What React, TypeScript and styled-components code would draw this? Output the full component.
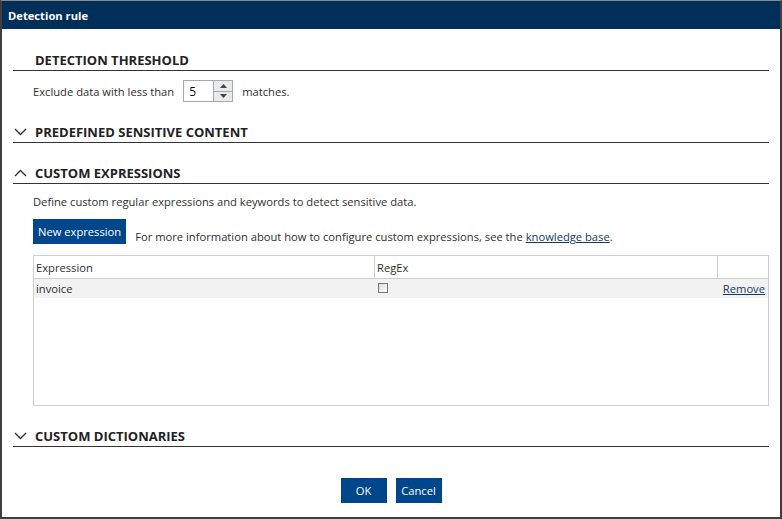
import React from "react";
import styled, { createGlobalStyle } from "styled-components";

const GlobalStyle = createGlobalStyle`
  html, body {
    margin: 0;
    padding: 0;
    background: #ffffff;
  }
  body {
    font-family: "Open Sans", "Noto Sans", "Liberation Sans", sans-serif;
    font-size: 11.2px;
    color: #2f2f2f;
  }
`;

const Window = styled.div`
  box-sizing: border-box;
  width: 782px;
  height: 519px;
  display: flex;
  flex-direction: column;
  border: 2px solid #3f3f3f;
  border-top: 1px solid #8a8a8a;
  background: #ffffff;
`;

const TitleBar = styled.div`
  height: 28px;
  flex-shrink: 0;
  background: #002f5a;
  color: #ffffff;
  font-weight: 700;
  font-size: 11.2px;
  display: flex;
  align-items: center;
  padding-left: 6px;
`;

const Body = styled.div`
  flex: 1;
  display: flex;
  flex-direction: column;
  padding: 21px 11px 0 11px;
`;

const Section = styled.section`
  display: flex;
  flex-direction: column;
  margin-bottom: 20px;
`;

const SectionHeader = styled.div`
  height: 20px;
  display: flex;
  align-items: center;
  border-bottom: 1px solid #333333;
`;

const ChevronSlot = styled.span`
  width: 21px;
  display: flex;
  align-items: center;
  padding-left: 1px;
`;

const SectionTitle = styled.h2`
  margin: 0;
  font-size: 13px;
  font-weight: 700;
  color: #222222;
  text-transform: uppercase;
`;

const SectionContent = styled.div`
  display: flex;
  flex-direction: column;
  padding-left: 20px;
`;

const ThresholdRow = styled.div`
  display: flex;
  align-items: center;
  gap: 9px;
  margin-top: 9px;
`;

const Spinner = styled.div`
  display: flex;
  height: 22px;
`;

const SpinInput = styled.div`
  box-sizing: border-box;
  width: 30px;
  height: 22px;
  border: 1px solid #a9a9a9;
  border-right: none;
  padding-left: 5px;
  display: flex;
  align-items: center;
  color: #111111;
  font-size: 12px;
`;

const SpinButtons = styled.div`
  display: flex;
  flex-direction: column;
  width: 20px;
`;

const SpinButton = styled.div<{ $up?: boolean }>`
  box-sizing: border-box;
  flex: 1;
  display: flex;
  align-items: center;
  justify-content: center;
  background: #e9eaeb;
  border: 1px solid #a9a9a9;
  border-top: ${(p) => (p.$up ? "1px solid #a9a9a9" : "none")};
`;

const Description = styled.div`
  margin-top: 10px;
  line-height: 16px;
`;

const ActionRow = styled.div`
  display: flex;
  align-items: flex-start;
  gap: 9px;
  margin-top: 9px;
`;

const PrimaryButton = styled.button`
  box-sizing: border-box;
  height: 25px;
  padding: 0 5px;
  border: none;
  background: #00468b;
  color: #ffffff;
  font-family: inherit;
  font-size: 11.2px;
  cursor: pointer;
  display: flex;
  align-items: center;
  justify-content: center;
`;

const InfoText = styled.span`
  padding-top: 11px;
  line-height: 14px;
`;

const Link = styled.a`
  color: #123a63;
  text-decoration: underline;
`;

const Table = styled.div`
  box-sizing: border-box;
  margin-top: 11px;
  height: 151px;
  border: 1px solid #cfcfcf;
  display: flex;
  flex-direction: column;
`;

const Row = styled.div<{ $head?: boolean }>`
  display: grid;
  grid-template-columns: 340px 343px 1fr;
  height: ${(p) => (p.$head ? "22px" : "19px")};
  background: ${(p) => (p.$head ? "#ffffff" : "#f2f2f2")};
  border-bottom: ${(p) => (p.$head ? "1px solid #cfcfcf" : "none")};
`;

const Cell = styled.div<{ $head?: boolean; $right?: boolean }>`
  display: flex;
  align-items: center;
  justify-content: ${(p) => (p.$right ? "flex-end" : "flex-start")};
  padding: 0 3px 0 2px;
  border-left: ${(p) => (p.$head ? "1px solid #cfcfcf" : "none")};
  &:first-child {
    border-left: none;
  }
`;

const Checkbox = styled.span`
  box-sizing: border-box;
  width: 10px;
  height: 10px;
  margin: -2px 0 0 2px;
  border: 1px solid #777777;
  background: linear-gradient(135deg, #d8dbe2, #ffffff);
`;

const Footer = styled.div`
  display: flex;
  justify-content: center;
  gap: 9px;
  margin-top: 11px;
`;

const DialogButton = styled(PrimaryButton)`
  width: 46px;
  padding: 0;
`;

const Chevron = ({ up }: { up?: boolean }) => (
  <svg width="13" height="8" viewBox="0 0 13 8">
    <path
      d={up ? "M1 7 L6.5 1.5 L12 7" : "M1 1 L6.5 6.5 L12 1"}
      fill="none"
      stroke="#333"
      strokeWidth="1.4"
    />
  </svg>
);

const Arrow = ({ up }: { up?: boolean }) => (
  <svg width="7" height="4" viewBox="0 0 7 4">
    <path d={up ? "M0 4 L3.5 0 L7 4 Z" : "M0 0 L3.5 4 L7 0 Z"} fill="#444" />
  </svg>
);

const SectionBlock: React.FC<{
  title: string;
  chevron?: "up" | "down";
  children?: React.ReactNode;
}> = ({ title, chevron, children }) => (
  <Section>
    <SectionHeader>
      <ChevronSlot>{chevron && <Chevron up={chevron === "up"} />}</ChevronSlot>
      <SectionTitle>{title}</SectionTitle>
    </SectionHeader>
    {children && <SectionContent>{children}</SectionContent>}
  </Section>
);

const expressions = [{ expression: "invoice", regex: false }];

const App: React.FC = () => {
  return (
    <>
      <GlobalStyle />
      <Window>
        <TitleBar>Detection rule</TitleBar>
        <Body>
          <SectionBlock title="Detection threshold">
            <ThresholdRow>
              <span>Exclude data with less than</span>
              <Spinner>
                <SpinInput>5</SpinInput>
                <SpinButtons>
                  <SpinButton $up>
                    <Arrow up />
                  </SpinButton>
                  <SpinButton>
                    <Arrow />
                  </SpinButton>
                </SpinButtons>
              </Spinner>
              <span>matches.</span>
            </ThresholdRow>
          </SectionBlock>

          <SectionBlock title="Predefined sensitive content" chevron="down" />

          <SectionBlock title="Custom expressions" chevron="up">
            <Description>
              Define custom regular expressions and keywords to detect sensitive data.
            </Description>
            <ActionRow>
              <PrimaryButton>New expression</PrimaryButton>
              <InfoText>
                For more information about how to configure custom expressions, see the{" "}
                <Link>knowledge base</Link>.
              </InfoText>
            </ActionRow>
            <Table>
              <Row $head>
                <Cell $head>Expression</Cell>
                <Cell $head>RegEx</Cell>
                <Cell $head />
              </Row>
              {expressions.map((e) => (
                <Row key={e.expression}>
                  <Cell>{e.expression}</Cell>
                  <Cell>
                    <Checkbox />
                  </Cell>
                  <Cell $right>
                    <Link>Remove</Link>
                  </Cell>
                </Row>
              ))}
            </Table>
          </SectionBlock>

          <SectionBlock title="Custom dictionaries" chevron="down" />

          <Footer>
            <DialogButton>OK</DialogButton>
            <DialogButton>Cancel</DialogButton>
          </Footer>
        </Body>
      </Window>
    </>
  );
};

export default App;
